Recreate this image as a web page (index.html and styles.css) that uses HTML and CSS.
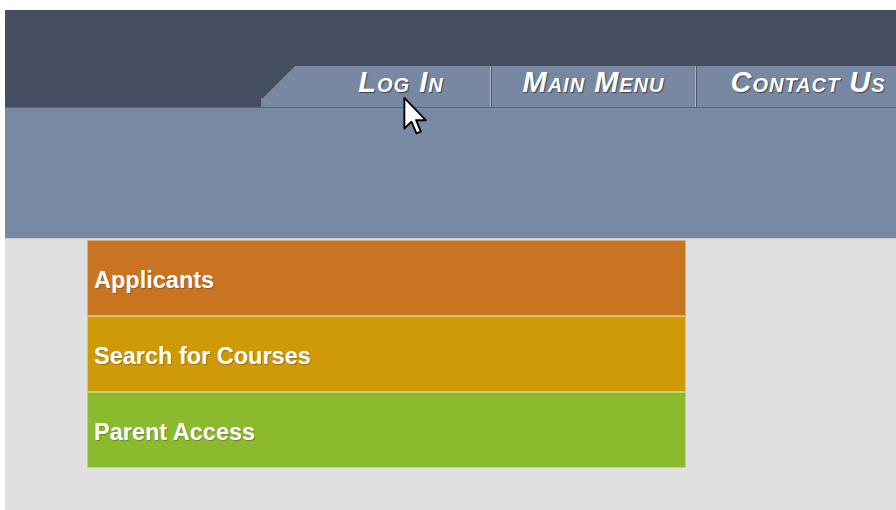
FILE: index.html
```html
<!DOCTYPE html>
<html lang="en">
<head>
<meta charset="utf-8">
<title>Student Portal</title>
<link rel="stylesheet" href="styles.css">
</head>
<body>
<div class="page">
  <header class="topbar">
    <nav class="tabs">
      <span class="tab-corner"></span>
      <a class="tab tab-login" href="#">Log In</a>
      <span class="tab-sep"></span>
      <a class="tab tab-menu" href="#">Main Menu</a>
      <span class="tab-sep"></span>
      <a class="tab tab-contact" href="#">Contact Us</a>
    </nav>
    <svg class="pointer" width="25" height="39" viewBox="0 0 13 21" aria-hidden="true">
      <path d="M0.5 0.5 L0.5 17 L4.3 13.3 L7 19.6 L9.4 18.6 L6.8 12.5 L12 12.5 Z" fill="#fff" stroke="#000" stroke-width="1" stroke-linejoin="round"/>
    </svg>
  </header>
  <div class="band"></div>
  <main class="content">
    <ul class="quick-links">
      <li><a class="link link-applicants" href="#">Applicants</a></li>
      <li><a class="link link-courses" href="#">Search for Courses</a></li>
      <li><a class="link link-parent" href="#">Parent Access</a></li>
    </ul>
  </main>
</div>
</body>
</html>
```

FILE: styles.css
```css
html, body {
  margin: 0;
  height: 100%;
}

body {
  background: #ffffff;
  padding: 10px 0 0 5px;
  box-sizing: border-box;
  overflow: hidden;
  font-family: "Liberation Sans", Arial, sans-serif;
}

.page {
  background: #e0e0e0;
  min-height: 500px;
  overflow: hidden;
}

/* dark top bar with the tab strip sitting on its bottom edge */
.topbar {
  position: relative;
  height: 97px;
  background: #464e62;
  display: flex;
  align-items: flex-end;
  padding-left: 256px;
  border-bottom: 1px solid #5b6479;
}

.tabs {
  display: flex;
  height: 41px;
  flex: none;
}

.tab-corner {
  width: 34px;
  background: #7888a2;
  clip-path: polygon(0 100%, 0 78%, 2px 78%, 34px 0, 100% 0, 100% 100%);
}

.tab {
  display: flex;
  align-items: center;
  justify-content: center;
  background: #7888a2;
  color: #ffffff;
  text-decoration: none;
  font-weight: bold;
  font-style: italic;
  font-variant: small-caps;
  font-size: 29px;
  letter-spacing: 1px;
  line-height: 1;
  padding-bottom: 9px;
  box-sizing: border-box;
  text-shadow: 1px 1px 1px rgba(30, 36, 52, 0.7);
  flex: none;
}

.tab-login {
  width: 195px;
  padding-left: 17px;
}

.tab-menu {
  width: 203px;
}

.tab-contact {
  width: 222px;
}

.tab-sep {
  width: 1px;
  background: #aab4c5;
  border-right: 1px solid #4f586c;
}

.pointer {
  position: absolute;
  left: 398px;
  top: 87px;
  z-index: 2;
}

.band {
  height: 130px;
  background: #7889a3;
  border-bottom: 1px solid #c4c9d2;
}

.content {
  padding: 1px 0 0 82px;
}

.quick-links {
  list-style: none;
  margin: 0;
  padding: 0;
  width: 599px;
}

.link {
  display: flex;
  align-items: center;
  height: 76px;
  box-sizing: border-box;
  padding: 5px 0 0 6px;
  border: 1px solid rgba(255, 255, 255, 0.4);
  color: #ffffff;
  text-decoration: none;
  font-weight: bold;
  font-size: 23.5px;
  text-shadow: 1px 1px 1px rgba(60, 40, 10, 0.35);
}

.link-applicants {
  background: #c87420;
}

.link-courses {
  background: #cf9a08;
}

.link-parent {
  background: #8cba2e;
}
```
